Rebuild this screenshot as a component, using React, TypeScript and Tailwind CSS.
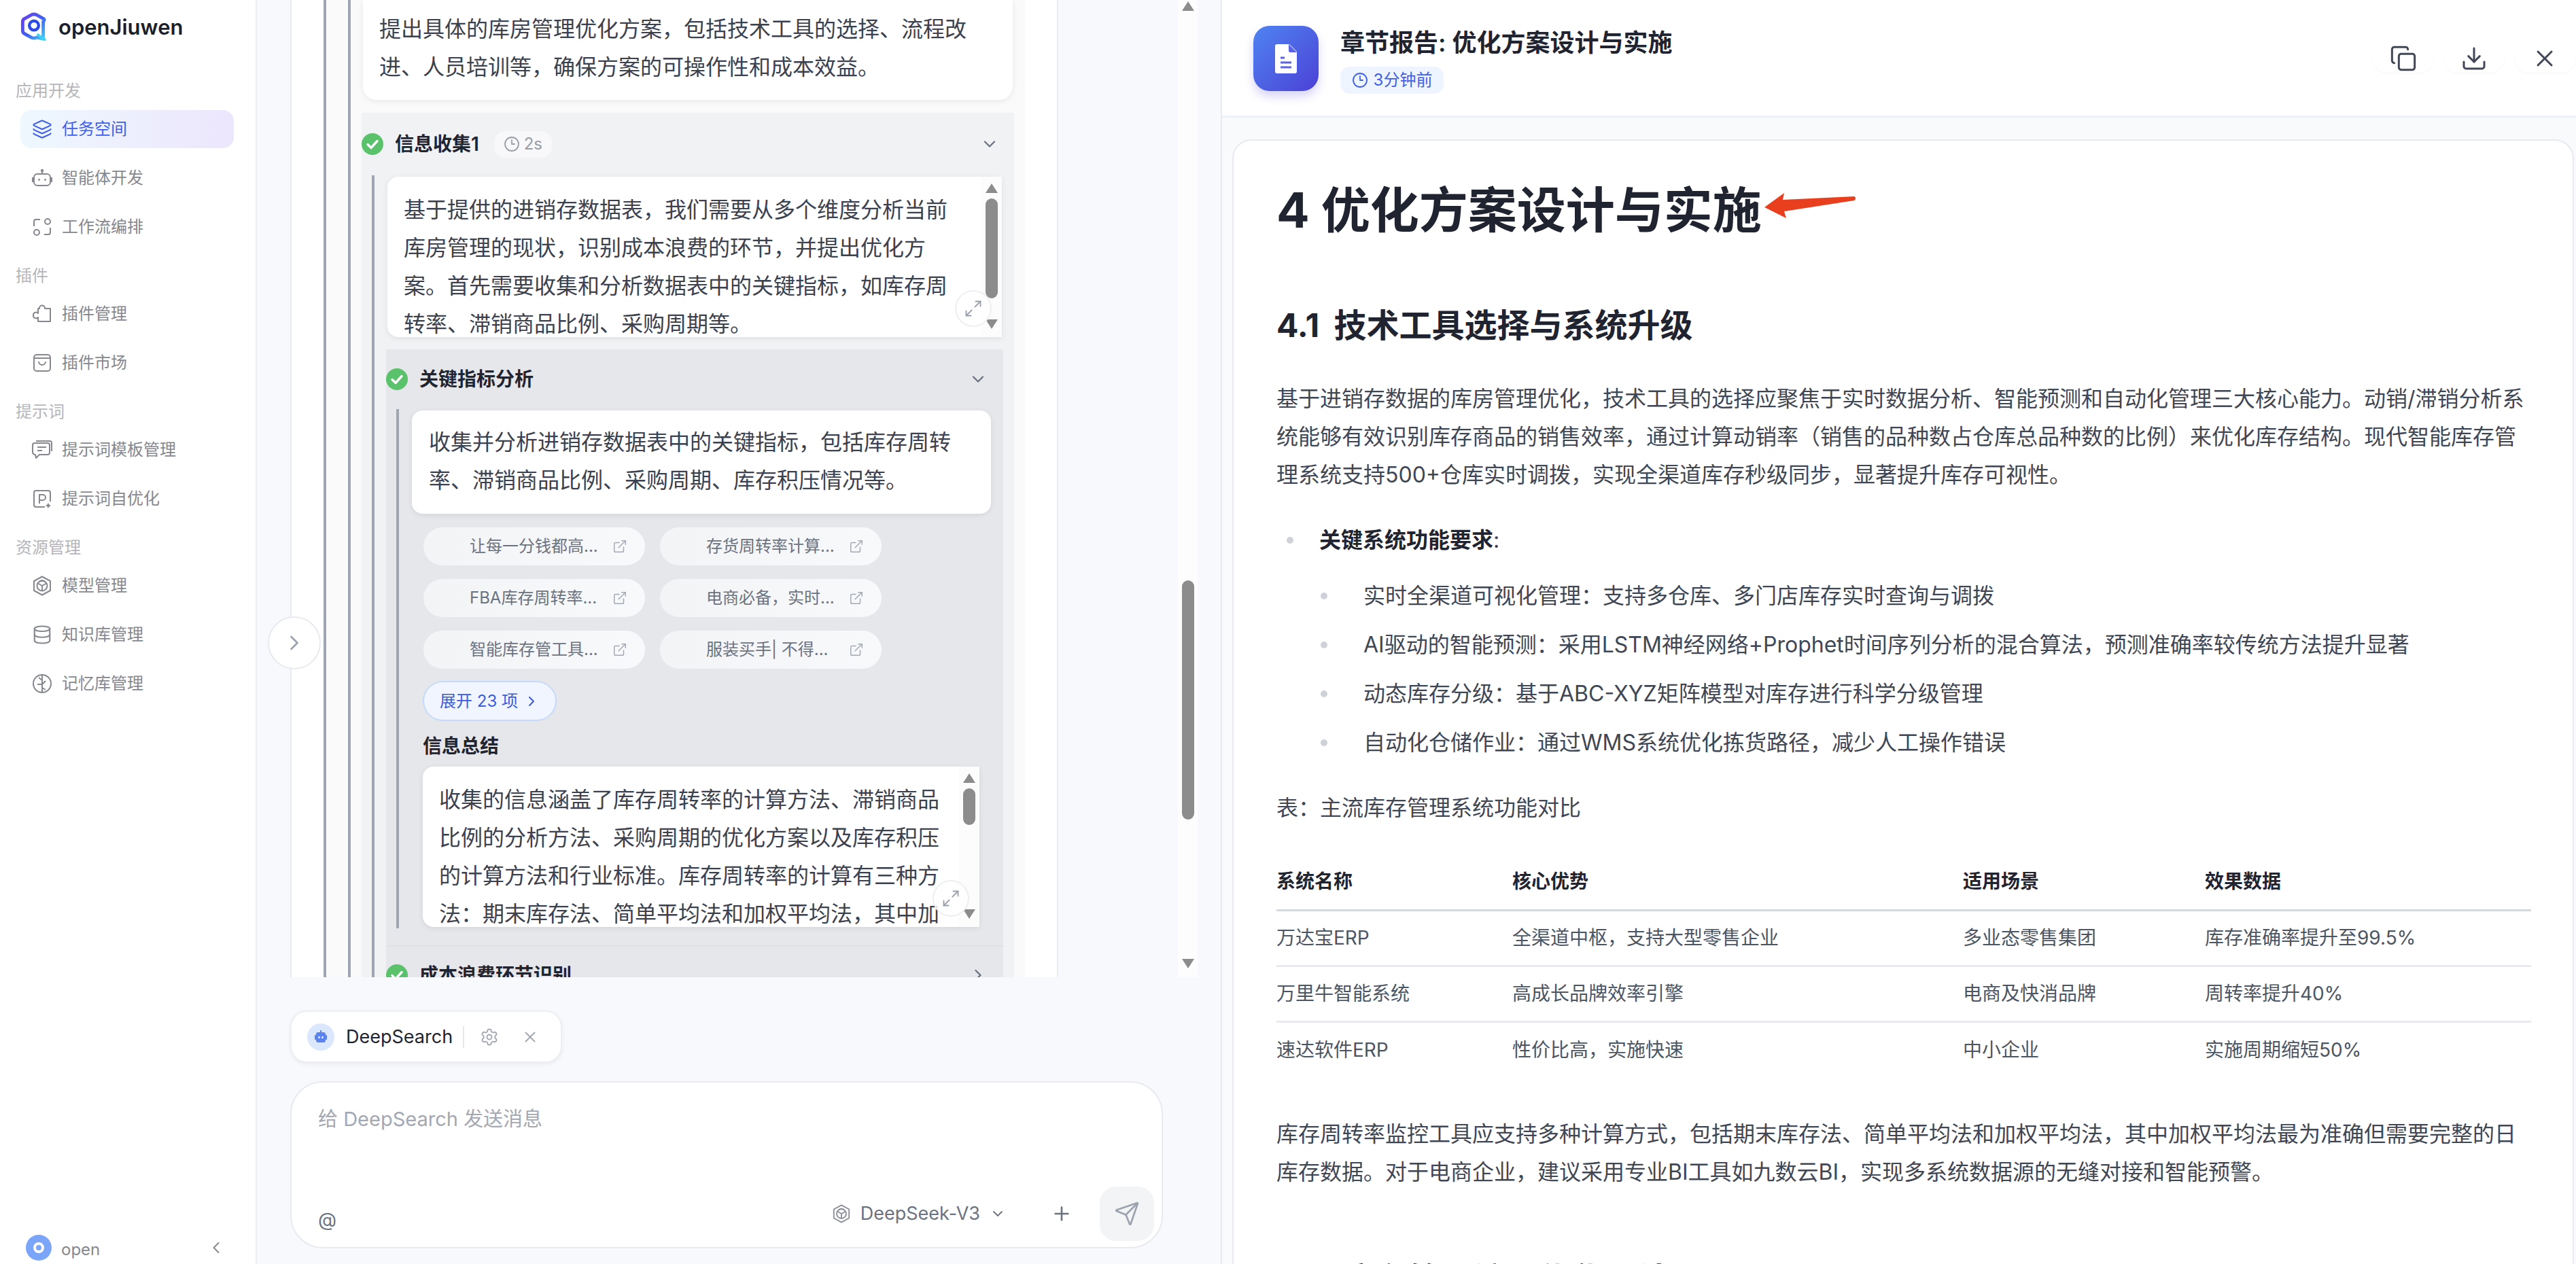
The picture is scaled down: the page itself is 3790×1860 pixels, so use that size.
import {
  ChevronDown,
  ChevronLeft,
  ChevronRight,
  Clock3,
  Copy,
  Database,
  Download,
  ExternalLink,
  Layers,
  Maximize2,
  Plus,
  Send,
  Settings,
  X,
} from "lucide-react";
import type { ReactNode } from "react";

type IconProps = { className?: string };

function BotIcon({ className }: IconProps) {
  return (
    <svg viewBox="0 0 30 30" fill="none" stroke="currentColor" strokeWidth="2" className={className}>
      <rect x="3" y="9" width="24" height="17" rx="5" />
      <path d="M15 9V5M1 14v7M29 14v7" />
      <circle cx="15" cy="4" r="1.2" fill="currentColor" />
      <circle cx="10.5" cy="17.5" r="1.4" fill="currentColor" stroke="none" />
      <circle cx="19.5" cy="17.5" r="1.4" fill="currentColor" stroke="none" />
    </svg>
  );
}

function FlowIcon({ className }: IconProps) {
  return (
    <svg viewBox="0 0 30 30" fill="none" stroke="currentColor" strokeWidth="2" className={className}>
      <path d="M12 4H6a3 3 0 0 0-3 3v7M18 26h6a3 3 0 0 0 3-3v-7" />
      <circle cx="23" cy="7" r="4" />
      <circle cx="7" cy="23" r="4" />
    </svg>
  );
}

function PuzzleIcon({ className }: IconProps) {
  return (
    <svg viewBox="0 0 30 30" fill="none" stroke="currentColor" strokeWidth="2" strokeLinejoin="round" className={className}>
      <path d="M11 7a4 4 0 0 1 8-1v1h8v19H9v-6a4 4 0 0 1-7-3 4 4 0 0 1 7-3V7z" />
    </svg>
  );
}

function BagIcon({ className }: IconProps) {
  return (
    <svg viewBox="0 0 30 30" fill="none" stroke="currentColor" strokeWidth="2" className={className}>
      <rect x="3" y="3" width="24" height="24" rx="4" />
      <path d="M3 8h24M10 13a5 5 0 0 0 10 0" />
    </svg>
  );
}

function PromptIcon({ className }: IconProps) {
  return (
    <svg viewBox="0 0 30 30" fill="none" stroke="currentColor" strokeWidth="2" strokeLinejoin="round" className={className}>
      <path d="M6 2h20a3 3 0 0 1 3 3v12" />
      <path d="M4 5h19a3 3 0 0 1 3 3v11a3 3 0 0 1-3 3H11l-5 5-1-5a4 4 0 0 1-4-3V8a3 3 0 0 1 3-3z" />
      <path d="M8 11h13M8 16h7" />
    </svg>
  );
}

function PromptTuneIcon({ className }: IconProps) {
  return (
    <svg viewBox="0 0 30 30" fill="none" stroke="currentColor" strokeWidth="2" className={className}>
      <path d="M27 19V6a3 3 0 0 0-3-3H6a3 3 0 0 0-3 3v18a3 3 0 0 0 3 3h13" />
      <path d="M11 22V9h5a4 4 0 0 1 0 8h-5" />
      <path d="M24 21l1.4 2.6L28 25l-2.6 1.4L24 29l-1.4-2.6L20 25l2.6-1.4z" fill="currentColor" stroke="none" />
    </svg>
  );
}

function ModelIcon({ className }: IconProps) {
  return (
    <svg viewBox="0 0 30 30" fill="none" stroke="currentColor" strokeWidth="2" strokeLinejoin="round" className={className}>
      <path d="M15 1.5 27 8v14l-12 6.5L3 22V8z" />
      <circle cx="15" cy="15" r="7.5" />
      <path d="M15 15V22M15 15l-6-3.5M15 15l6-3.5M11 9l4-2 4 2" />
    </svg>
  );
}

function BrainIcon({ className }: IconProps) {
  return (
    <svg viewBox="0 0 30 30" fill="none" stroke="currentColor" strokeWidth="2" className={className}>
      <circle cx="15" cy="15" r="13" />
      <path d="M15 2v26M15 10l-5-4M15 16h-7M15 16l5-5M15 21l5 3" />
    </svg>
  );
}

function Logo() {
  return (
    <svg viewBox="0 0 40 44" fill="none" className="h-[43px] w-[40px]">
      <defs>
        <linearGradient id="logo-ring" x1="0" y1="0" x2="1" y2="1">
          <stop offset="0%" stopColor="#6a3df0" />
          <stop offset="55%" stopColor="#3f63f0" />
          <stop offset="100%" stopColor="#3fd0f5" />
        </linearGradient>
      </defs>
      <path
        d="M16 4 6 9.5Q3 11 3 14.5v13Q3 31 6 32.5l10 5.5q4 2 8 0l10 2V14.5Q37 11 34 9.5L24 4Q20 2 16 4z"
        stroke="url(#logo-ring)"
        strokeWidth="5"
        strokeLinejoin="round"
      />
      <circle cx="20" cy="20" r="7" stroke="#2b4ce6" strokeWidth="4.5" />
      <path d="M26 34l10 7" stroke="#3fd0f5" strokeWidth="4" strokeLinecap="round" />
    </svg>
  );
}

const NAV_GROUPS = [
  {
    label: "应用开发",
    items: [
      { label: "任务空间", icon: Layers, active: true },
      { label: "智能体开发", icon: BotIcon },
      { label: "工作流编排", icon: FlowIcon },
    ],
  },
  {
    label: "插件",
    items: [
      { label: "插件管理", icon: PuzzleIcon },
      { label: "插件市场", icon: BagIcon },
    ],
  },
  {
    label: "提示词",
    items: [
      { label: "提示词模板管理", icon: PromptIcon },
      { label: "提示词自优化", icon: PromptTuneIcon },
    ],
  },
  {
    label: "资源管理",
    items: [
      { label: "模型管理", icon: ModelIcon },
      { label: "知识库管理", icon: Database },
      { label: "记忆库管理", icon: BrainIcon },
    ],
  },
];

function Sidebar() {
  return (
    <aside className="flex h-full w-[378px] shrink-0 flex-col border-r-2 border-[#eceef3] bg-white">
      <div className="flex h-[118px] items-start gap-[16px] pl-[30px] pt-[18px]">
        <Logo />
        <span className="text-[31px] leading-[43px] font-semibold text-[#1b1f2a]">openJiuwen</span>
      </div>
      <nav className="flex flex-col gap-[28px]">
        {NAV_GROUPS.map((group) => (
          <div key={group.label}>
            <div className="mb-[12px] h-[32px] pl-[23px] text-[24px] leading-[32px] text-[#b4b6bb]">{group.label}</div>
            <div className="flex flex-col gap-[16px]">
              {group.items.map(({ label, icon: Icon, active }: { label: string; icon: any; active?: boolean }) => (
                <div
                  key={label}
                  className={
                    active
                      ? "ml-[30px] flex h-[56px] w-[314px] items-center gap-[14px] rounded-[16px] bg-gradient-to-r from-[#eef8ff] to-[#ece6fc] pl-[17px] text-[24px] text-[#3f5fe8]"
                      : "ml-[30px] flex h-[56px] w-[314px] items-center gap-[14px] rounded-[16px] pl-[17px] text-[24px] text-[#85888f]"
                  }
                >
                  <Icon className="h-[30px] w-[30px] shrink-0" strokeWidth={1.7} />
                  <span>{label}</span>
                </div>
              ))}
            </div>
          </div>
        ))}
      </nav>
      <div className="mt-auto flex items-center pb-[3px] pl-[38px] pr-[44px]">
        <div className="flex h-[38px] w-[38px] items-center justify-center rounded-full bg-[#7aa5f8]">
          <div className="h-[16px] w-[16px] rounded-full border-[4px] border-white" />
        </div>
        <span className="ml-[14px] mt-[6px] text-[24px] text-[#85888f]">open</span>
        <ChevronLeft className="ml-auto h-[28px] w-[28px] text-[#85888f]" strokeWidth={1.7} />
      </div>
    </aside>
  );
}

function CheckBadge() {
  return (
    <svg viewBox="0 0 32 32" className="h-[32px] w-[32px] shrink-0">
      <circle cx="16" cy="16" r="16" fill="#5ac26b" />
      <path d="M9 16.5l5 5 9-10" fill="none" stroke="#fff" strokeWidth="3.4" strokeLinecap="round" strokeLinejoin="round" />
    </svg>
  );
}

function Triangle({ up }: { up?: boolean }) {
  return (
    <svg viewBox="0 0 18 14" className="h-[14px] w-[18px] shrink-0 fill-[#8c8c8c]">
      <path d={up ? "M9 0 18 14H0z" : "M0 0h18L9 14z"} />
    </svg>
  );
}

function StepHeader({ title, time, open = true, className }: { title: string; time?: string; open?: boolean; className: string }) {
  return (
    <div className={className}>
      <CheckBadge />
      <span className="ml-[17px] text-[28px] leading-[40px] font-semibold text-[#1f2430]">{title}</span>
      {time && (
        <span className="ml-[22px] flex h-[39px] w-[85px] items-center justify-center gap-[6px] rounded-[16px] bg-[#f8f8fa] text-[24px] text-[#9a9da6]">
          <Clock3 className="h-[24px] w-[24px]" strokeWidth={1.8} />
          {time}
        </span>
      )}
      {open ? (
        <ChevronDown className="ml-auto h-[28px] w-[28px] text-[#6b7280]" strokeWidth={2} />
      ) : (
        <ChevronRight className="ml-auto h-[28px] w-[28px] text-[#6b7280]" strokeWidth={2} />
      )}
    </div>
  );
}

function ScrollText({ text, thumb, className }: { text: string; thumb: string; className: string }) {
  return (
    <div className={className}>
      <p className="flex-1 overflow-hidden pl-[24px] pr-[24px] pt-[21px] text-[32px] leading-[56px] text-[#3b414e]">{text}</p>
      <div className="flex w-[30px] shrink-0 flex-col items-center bg-[#fcfcfc] pb-[12px] pt-[10px]">
        <Triangle up />
        <div className={thumb} />
        <div className="mt-auto">
          <Triangle />
        </div>
      </div>
      <div className="absolute bottom-[15px] right-[15px] flex h-[54px] w-[54px] items-center justify-center rounded-full border-2 border-[#eceef1] bg-white/80">
        <Maximize2 className="h-[28px] w-[28px] text-[#9aa0aa]" strokeWidth={1.6} />
      </div>
    </div>
  );
}

const LINKS = [
  "让每一分钱都高...",
  "存货周转率计算...",
  "FBA库存周转率...",
  "电商必备，实时...",
  "智能库存管工具...",
  "服装买手| 不得...",
];

function LinkPill({ label }: { label: string }) {
  return (
    <div className="flex h-[56px] w-[326px] items-center rounded-full bg-gradient-to-r from-[#f3f4f6] to-[#f8f9fb] pl-[68px] pr-[26px]">
      <span className="text-[24px] text-[#6b7280]">{label}</span>
      <ExternalLink className="ml-auto h-[22px] w-[22px] text-[#a3a8b2]" strokeWidth={1.6} />
    </div>
  );
}

function DotItem({ children, sub }: { children: ReactNode; sub?: boolean }) {
  return (
    <li
      className={
        sub
          ? "ml-[65px] flex items-center gap-[53px] text-[32px] leading-[56px] text-[#3f4654]"
          : "ml-[15px] flex items-center gap-[38px] text-[32px] leading-[56px] text-[#3f4654]"
      }
    >
      <span className="h-[10px] w-[10px] shrink-0 rounded-full bg-[#ced1d8]" />
      <span>{children}</span>
    </li>
  );
}

const ROWS = [
  ["万达宝ERP", "全渠道中枢，支持大型零售企业", "多业态零售集团", "库存准确率提升至99.5%"],
  ["万里牛智能系统", "高成长品牌效率引擎", "电商及快消品牌", "周转率提升40%"],
  ["速达软件ERP", "性价比高，实施快速", "中小企业", "实施周期缩短50%"],
];

function MiddlePane() {
  return (
    <main className="relative h-full w-[1418px] shrink-0 bg-[#f8f9fd]">
      <div className="flex h-[1438px]">
        <div className="ml-[49px] h-full w-[1130px] shrink-0 overflow-hidden border-x-2 border-[#e8eaef] bg-white px-[47px]">
          <div className="h-full border-l-4 border-[#a0a5b2] bg-[#fafafb] pr-[16px]">
            <div className="ml-[32px] h-full border-l-4 border-[#a0a5b2] pl-[16px]">
              <div className="mx-[2px] h-[147px] rounded-b-[20px] bg-white pl-[24px] pr-[24px] pt-[15px] text-[32px] leading-[56px] text-[#3b414e] shadow-[0_2px_8px_rgba(0,0,0,0.08)]">
                提出具体的库房管理优化方案，包括技术工具的选择、流程改进、人员培训等，确保方案的可操作性和成本效益。
              </div>
              <div className="mt-[19px] bg-[#f1f2f4]">
                <StepHeader title="信息收集1" time="2s" className="flex h-[92px] items-center pr-[22px]" />
                <div className="ml-[15px] border-l-4 border-[#a0a5b2] pl-[17px] pr-[16px] pt-[2px]">
                  <ScrollText
                    className="relative mx-[2px] flex h-[236px] overflow-hidden rounded-l-[16px] bg-white shadow-[0_2px_8px_rgba(0,0,0,0.08)]"
                    thumb="mt-[8px] h-[147px] w-[18px] rounded-full bg-[#8c8c8c]"
                    text="基于提供的进销存数据表，我们需要从多个维度分析当前库房管理的现状，识别成本浪费的环节，并提出优化方案。首先需要收集和分析数据表中的关键指标，如库存周转率、滞销商品比例、采购周期等。"
                  />
                  <div className="mt-[18px] bg-[#e6e7eb]">
                    <StepHeader title="关键指标分析" className="flex h-[88px] items-center pr-[23px]" />
                    <div className="ml-[15px] border-l-4 border-[#a0a5b2] pb-[2px] pl-[19px] pr-[18px] pt-[2px]">
                      <div className="h-[152px] rounded-[16px] bg-white px-[25px] pt-[19px] text-[32px] leading-[56px] text-[#3b414e] shadow-[0_2px_8px_rgba(0,0,0,0.08)]">
                        收集并分析进销存数据表中的关键指标，包括库存周转率、滞销商品比例、采购周期、库存积压情况等。
                      </div>
                      <div className="mt-[20px] grid grid-cols-[326px_326px] gap-x-[22px] gap-y-[20px] pl-[17px]">
                        {LINKS.map((label) => (
                          <LinkPill key={label} label={label} />
                        ))}
                      </div>
                      <div className="ml-[16px] mt-[18px] flex h-[59px] w-[197px] items-center justify-center gap-[8px] rounded-full border-2 border-[#c5d9fb] bg-[#f0f5ff] text-[24px] text-[#3b5bdb]">
                        展开 23 项
                        <ChevronRight className="h-[24px] w-[24px]" strokeWidth={2} />
                      </div>
                      <div className="ml-[16px] mt-[17px] text-[28px] leading-[40px] font-semibold text-[#1f2430]">信息总结</div>
                      <ScrollText
                        className="relative ml-[16px] mr-[17px] mt-[10px] flex h-[236px] overflow-hidden rounded-l-[16px] bg-white shadow-[0_2px_8px_rgba(0,0,0,0.08)]"
                        thumb="mt-[8px] h-[54px] w-[18px] rounded-full bg-[#8c8c8c]"
                        text="收集的信息涵盖了库存周转率的计算方法、滞销商品比例的分析方法、采购周期的优化方案以及库存积压的计算方法和行业标准。库存周转率的计算有三种方法：期末库存法、简单平均法和加权平均法，其中加权平均法最为准确但需要完整的日库存数据。"
                      />
                    </div>
                    <div className="mt-[25px] border-t-2 border-[#e0e1e5]">
                      <StepHeader title="成本浪费环节识别" open={false} className="flex h-[84px] items-center pr-[23px]" />
                    </div>
                  </div>
                </div>
              </div>
            </div>
          </div>
        </div>
        <div className="ml-[176px] flex h-full w-[29px] shrink-0 flex-col items-center bg-[#fdfdfe] pb-[13px] pt-[2px]">
          <Triangle up />
          <div className="mt-[838px] h-[352px] w-[18px] rounded-full bg-[#8c8c8c]" />
          <div className="mt-auto">
            <Triangle />
          </div>
        </div>
      </div>

      <div className="ml-[49px] mt-[49px] flex h-[77px] w-[400px] items-center rounded-[24px] border-2 border-[#eceef3] bg-white pl-[23px] shadow-[0_2px_6px_rgba(0,0,0,0.06)]">
        <div className="flex h-[40px] w-[40px] items-center justify-center rounded-full bg-[#dbe7fd]">
          <svg viewBox="0 0 24 24" className="h-[24px] w-[24px] text-[#5b83ef]" fill="currentColor">
            <path d="M11 2h2v3h3a3 3 0 0 1 3 3v1h1a1 1 0 0 1 1 1v5a1 1 0 0 1-1 1h-1v1a3 3 0 0 1-3 3H8a3 3 0 0 1-3-3v-1H4a1 1 0 0 1-1-1v-5a1 1 0 0 1 1-1h1V8a3 3 0 0 1 3-3h3z" />
            <rect x="8.5" y="11" width="2" height="3" fill="#fff" />
            <rect x="13.5" y="11" width="2" height="3" fill="#fff" />
          </svg>
        </div>
        <span className="ml-[17px] text-[27px] leading-none text-[#1f2430]">DeepSearch</span>
        <div className="ml-[15px] h-[32px] w-[2px] bg-[#e5e7eb]" />
        <Settings className="ml-[23px] h-[28px] w-[28px] text-[#a3a8b2]" strokeWidth={1.6} />
        <X className="ml-[33px] h-[26px] w-[26px] text-[#a3a8b2]" strokeWidth={1.8} />
      </div>

      <div className="ml-[49px] mt-[27px] flex h-[246px] w-[1284px] flex-col rounded-[48px] border-2 border-[#e8eaef] bg-white pb-[9px] pl-[39px] pr-[11px] pt-[32px]">
        <div className="text-[29px] leading-[44px] text-[#a3a8b2]">给 DeepSearch 发送消息</div>
        <div className="mt-auto flex items-center">
          <span className="mt-[18px] text-[28px] text-[#6b7280]">@</span>
          <ModelIcon className="ml-auto h-[28px] w-[28px] text-[#8a8f99]" />
          <span className="ml-[14px] text-[27px] text-[#6b7280]">DeepSeek-V3</span>
          <ChevronDown className="ml-[14px] h-[24px] w-[24px] text-[#6b7280]" strokeWidth={1.8} />
          <Plus className="ml-[66px] h-[32px] w-[32px] text-[#6b7280]" strokeWidth={2} />
          <div className="ml-[40px] flex h-[80px] w-[80px] items-center justify-center rounded-[24px] bg-[#f3f4f6]">
            <Send className="h-[38px] w-[38px] text-[#9ca3af]" strokeWidth={1.7} />
          </div>
        </div>
      </div>

      <div className="absolute left-[16px] top-[907px] flex h-[78px] w-[78px] items-center justify-center rounded-full border-2 border-[#e8eaef] bg-white">
        <ChevronRight className="h-[36px] w-[36px] text-[#9ca3af]" strokeWidth={1.8} />
      </div>
    </main>
  );
}

function ReportPane() {
  return (
    <section className="flex h-full min-w-0 flex-1 flex-col overflow-hidden border-l-2 border-[#e8eaef] bg-[#f9fafc]">
      <header className="flex h-[173px] shrink-0 items-start border-b-[3px] border-[#eef3fb] bg-white pl-[46px] pr-[2px] pt-[38px]">
        <div className="flex h-[96px] w-[96px] shrink-0 items-center justify-center rounded-[24px] bg-gradient-to-br from-[#4f83f1] to-[#4b3fd6] shadow-[0_8px_14px_rgba(75,63,214,0.22)]">
          <svg viewBox="0 0 32 43" className="h-[43px] w-[32px]">
            <path d="M3 0h18l11 11v29a3 3 0 0 1-3 3H3a3 3 0 0 1-3-3V3a3 3 0 0 1 3-3z" fill="#fff" />
            <path d="M20 0v10a2 2 0 0 0 2 2h10z" fill="#5a63e4" />
            <path d="M8 20h6M8 27h16M8 34h16" stroke="#5a63e4" strokeWidth="3.2" />
          </svg>
        </div>
        <div className="ml-[32px]">
          <div className="text-[36px] leading-[50px] font-semibold text-[#1f2430]">章节报告: 优化方案设计与实施</div>
          <div className="mt-[10px] flex h-[40px] w-[152px] items-center justify-center gap-[8px] rounded-[14px] bg-[#eff5ff] text-[24px] text-[#3f5fe8]">
            <Clock3 className="h-[24px] w-[24px]" strokeWidth={1.8} />
            3分钟前
          </div>
        </div>
        <div className="ml-auto mt-[27px] flex gap-[16px]">
          {[Copy, Download, X].map((Icon, i) => (
            <div key={i} className="flex h-[42px] w-[88px] items-center justify-center rounded-[20px] bg-white shadow-[0_1px_3px_rgba(0,0,0,0.04)]">
              <Icon className="h-[40px] w-[40px] text-[#414756]" strokeWidth={1.8} />
            </div>
          ))}
        </div>
      </header>

      <article className="relative ml-[15px] mr-[3px] mt-[32px] flex-1 rounded-t-[28px] border-x-2 border-t-2 border-[#e8eaef] bg-white pl-[63px] pr-[61px] pt-[57px]">
        <h1 className="text-[72px] leading-[90px] font-bold text-[#1f2430]">4 优化方案设计与实施</h1>
        <svg viewBox="0 0 140 40" className="absolute left-[779px] top-[76px] h-[40px] w-[140px]">
          <path d="M2 22 31 1 29 11 134 6a3.2 3.2 0 0 1 0 6L31 28 34 38z" fill="#e8401f" />
        </svg>
        <h2 className="mt-[93px] text-[48px] leading-[64px] font-bold text-[#1f2430] [word-spacing:10px]">4.1 技术工具选择与系统升级</h2>
        <p className="mt-[48px] text-[32px] leading-[56px] text-[#3f4654]">
          基于进销存数据的库房管理优化，技术工具的选择应聚焦于实时数据分析、智能预测和自动化管理三大核心能力。动销/滞销分析系统能够有效识别库存商品的销售效率，通过计算动销率（销售的品种数占仓库总品种数的比例）来优化库存结构。现代智能库存管理系统支持500+仓库实时调拨，实现全渠道库存秒级同步，显著提升库存可视性。
        </p>
        <ul className="mt-[40px]">
          <DotItem>
            <b className="font-semibold text-[#1f2430]">关键系统功能要求</b>:
          </DotItem>
        </ul>
        <ul className="mt-[26px] flex flex-col gap-[16px]">
          <DotItem sub>实时全渠道可视化管理：支持多仓库、多门店库存实时查询与调拨</DotItem>
          <DotItem sub>AI驱动的智能预测：采用LSTM神经网络+Prophet时间序列分析的混合算法，预测准确率较传统方法提升显著</DotItem>
          <DotItem sub>动态库存分级：基于ABC-XYZ矩阵模型对库存进行科学分级管理</DotItem>
          <DotItem sub>自动化仓储作业：通过WMS系统优化拣货路径，减少人工操作错误</DotItem>
        </ul>
        <p className="mt-[40px] text-[32px] leading-[56px] text-[#3f4654]">表：主流库存管理系统功能对比</p>
        <table className="mt-[40px] w-full table-fixed text-left text-[28px]">
          <colgroup>
            <col className="w-[347px]" />
            <col className="w-[663px]" />
            <col className="w-[356px]" />
            <col />
          </colgroup>
          <thead>
            <tr className="h-[82px] border-b-[3px] border-[#d5d8de] font-semibold text-[#1f2430]">
              <th className="font-semibold">系统名称</th>
              <th className="font-semibold">核心优势</th>
              <th className="font-semibold">适用场景</th>
              <th className="font-semibold">效果数据</th>
            </tr>
          </thead>
          <tbody className="text-[#4b5563]">
            {ROWS.map((row, i) => (
              <tr key={row[0]} className={i < 2 ? "h-[82px] border-b-[3px] border-[#e8eaef]" : "h-[82px]"}>
                {row.map((cell) => (
                  <td key={cell}>{cell}</td>
                ))}
              </tr>
            ))}
          </tbody>
        </table>
        <p className="mt-[56px] text-[32px] leading-[56px] text-[#3f4654]">
          库存周转率监控工具应支持多种计算方式，包括期末库存法、简单平均法和加权平均法，其中加权平均法最为准确但需要完整的日库存数据。对于电商企业，建议采用专业BI工具如九数云BI，实现多系统数据源的无缝对接和智能预警。
        </p>
        <h2 className="mt-[98px] text-[48px] leading-[64px] font-bold text-[#1f2430] [word-spacing:10px]">4.2 库存管理流程优化设计</h2>
      </article>
    </section>
  );
}

export default function App() {
  return (
    <div className="flex h-[1860px] w-[3790px] overflow-hidden bg-white font-[Inter,'Noto_Sans_CJK_SC',sans-serif]">
      <Sidebar />
      <MiddlePane />
      <ReportPane />
    </div>
  );
}
